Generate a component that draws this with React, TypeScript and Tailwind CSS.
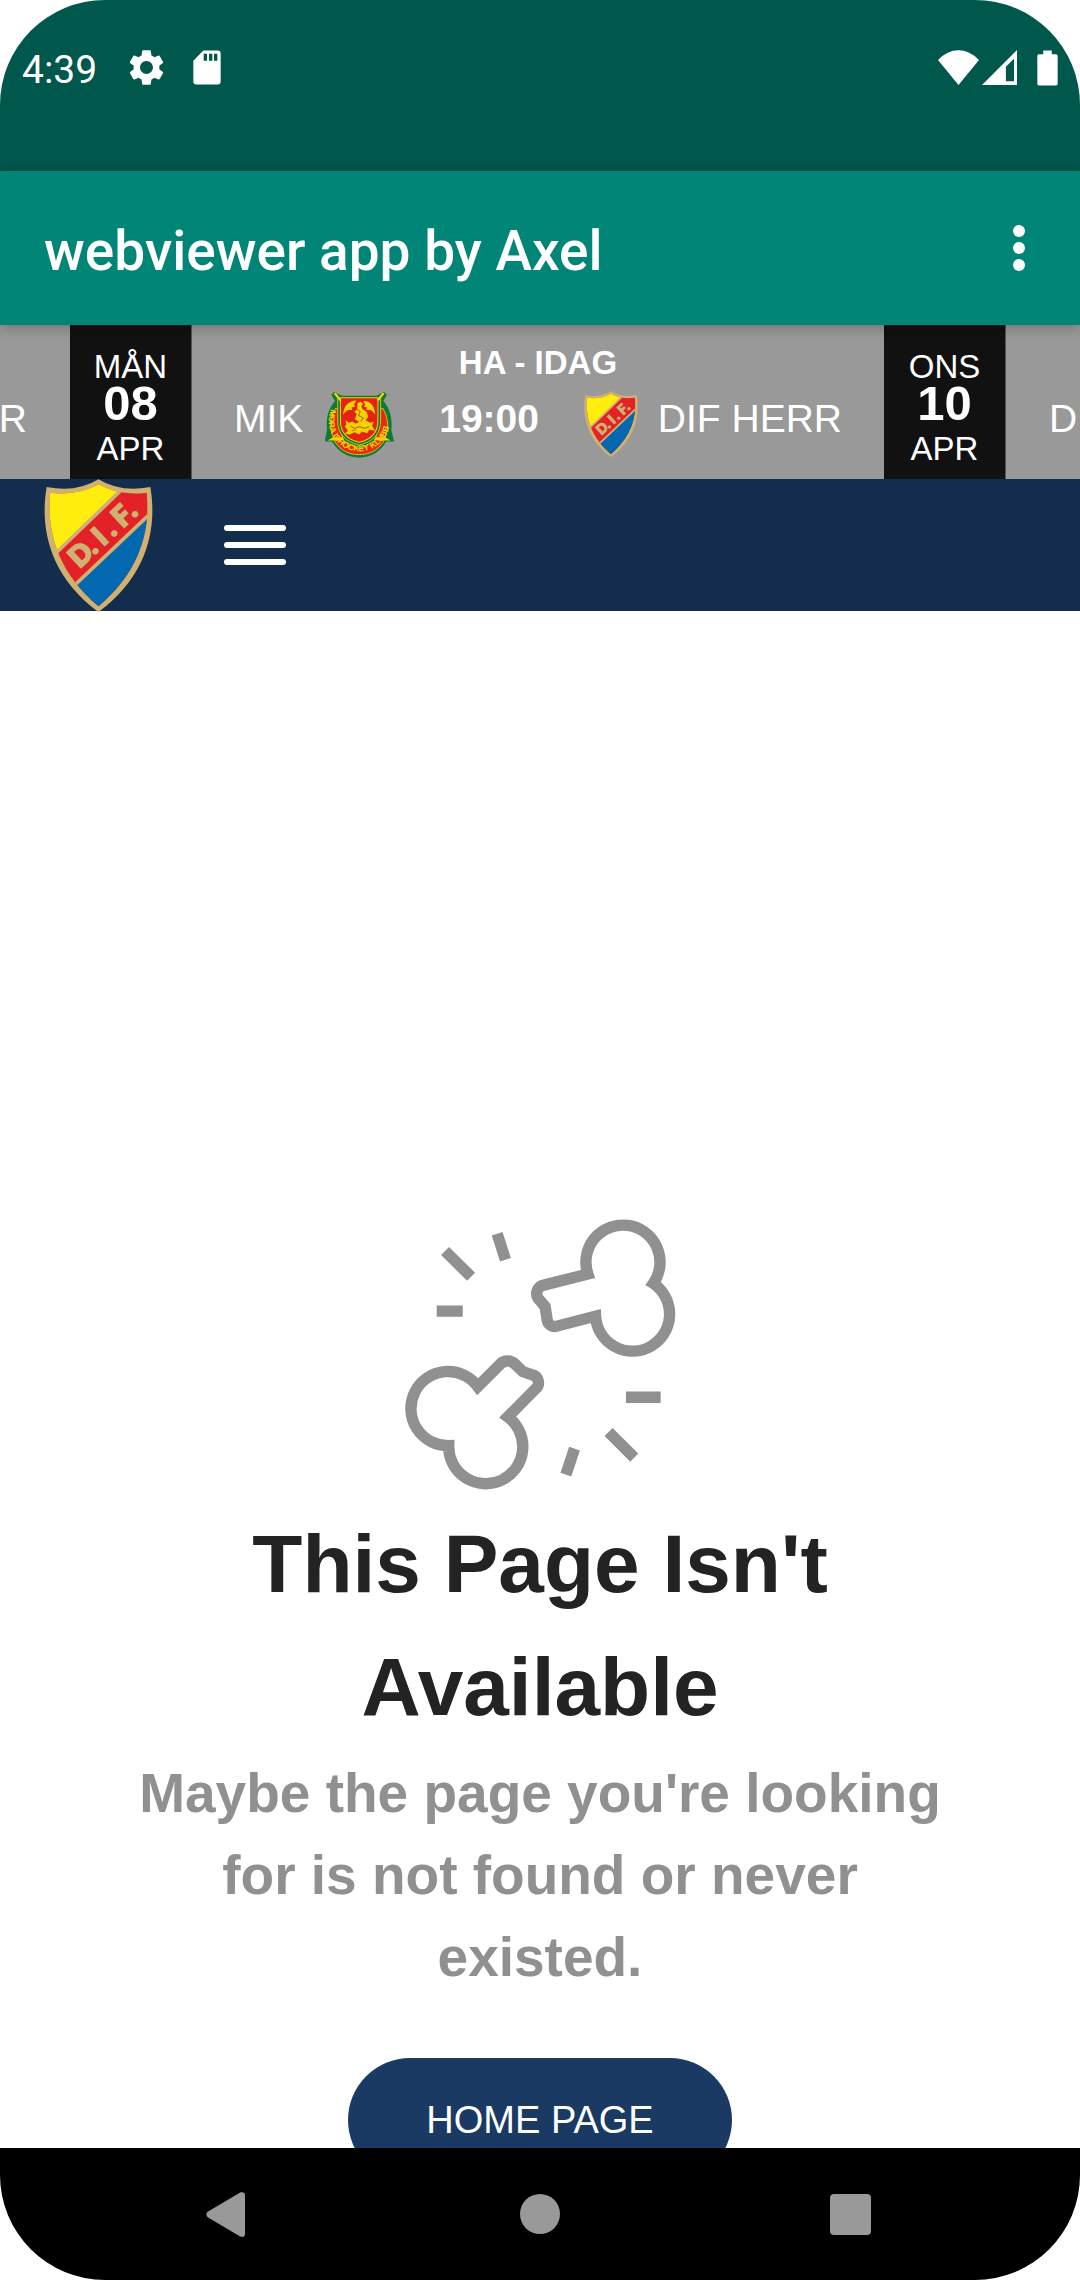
import React from "react";

function GearIcon() {
  return (
    <svg viewBox="0 0 24 24" className="size-[43px]" fill="currentColor" aria-hidden="true">
      <path d="M19.14 12.94c.04-.3.06-.61.06-.94 0-.32-.02-.64-.07-.94l2.03-1.58a.49.49 0 0 0 .12-.61l-1.92-3.32a.488.488 0 0 0-.59-.22l-2.39.96c-.5-.38-1.03-.7-1.62-.94L14.4 2.81a.484.484 0 0 0-.48-.41h-3.84c-.24 0-.43.17-.47.41l-.36 2.54c-.59.24-1.13.57-1.62.94l-2.39-.96c-.22-.08-.47 0-.59.22L2.74 8.87c-.12.21-.08.47.12.61l2.03 1.58c-.05.3-.09.63-.09.94s.02.64.07.94l-2.03 1.58a.49.49 0 0 0-.12.61l1.92 3.32c.12.22.37.29.59.22l2.39-.96c.5.38 1.03.7 1.62.94l.36 2.54c.05.24.24.41.48.41h3.84c.24 0 .44-.17.47-.41l.36-2.54c.59-.24 1.13-.56 1.62-.94l2.39.96c.22.08.47 0 .59-.22l1.92-3.32c.12-.22.07-.47-.12-.61l-2.01-1.58zM12 15.6c-1.98 0-3.6-1.62-3.6-3.6s1.62-3.6 3.6-3.6 3.6 1.62 3.6 3.6-1.62 3.6-3.6 3.6z" />
    </svg>
  );
}

function SdCardIcon() {
  return (
    <svg viewBox="0 0 84 104" className="h-[35px] w-7" fill="currentColor" aria-hidden="true">
      <path
        fillRule="evenodd"
        d="M31 1H74Q83 1 83 10V94Q83 103 74 103H10Q1 103 1 94V32ZM32 11V32H42V11ZM48 11V32H58V11ZM63 11V32H73V11Z"
      />
    </svg>
  );
}

function StatusBar() {
  return (
    <div className="flex h-[171px] shrink-0 items-center justify-between bg-[#00574b] pr-[22px] pb-9 pl-[22px] text-white">
      <div className="flex items-center">
        <span className="pt-1 font-['Roboto',sans-serif] text-[39px] leading-[46px]">4:39</span>
        <div className="ml-7 flex items-center gap-[25px]">
          <GearIcon />
          <SdCardIcon />
        </div>
      </div>
      <div className="flex items-center">
        <svg viewBox="0 0 122 104" className="h-[35px] w-[41px]" fill="currentColor" aria-hidden="true">
          <path d="M0 30Q28 1 61 1T122 30L61 104Z" />
        </svg>
        <svg viewBox="0 0 104 104" className="ml-[3px] size-[35px]" fill="currentColor" aria-hidden="true">
          <path fillRule="evenodd" d="M104 0V104H0ZM95 26L71 50V93H95Z" />
        </svg>
        <svg viewBox="0 0 64 108" className="ml-5 h-9 w-[21px]" fill="currentColor" aria-hidden="true">
          <path d="M19 1H45V12H58Q63 12 63 17V102Q63 107 58 107H6Q1 107 1 102V17Q1 12 6 12H19Z" />
        </svg>
      </div>
    </div>
  );
}

function AppBar() {
  return (
    <header className="relative z-10 flex h-[154px] shrink-0 items-center justify-between bg-[#008577] pr-[41px] pl-11 text-white shadow-[0_3px_12px_rgba(0,0,0,0.25)]">
      <h1 className="pt-[6px] font-['Roboto',sans-serif] text-[55px] leading-[64px] font-medium">
        webviewer app by Axel
      </h1>
      <button type="button" aria-label="More options" className="flex w-10 flex-col items-center gap-[5px]">
        <span className="size-3 rounded-full bg-white" />
        <span className="size-3 rounded-full bg-white" />
        <span className="size-3 rounded-full bg-white" />
      </button>
    </header>
  );
}

function DifCrest({ className }: { className: string }) {
  const id = React.useId();
  return (
    <svg viewBox="73 56 328 400" className={className} role="img" aria-label="DIF">
      <defs>
        <clipPath id={id}>
          <path d="M237 72Q173 108 92 97C82 190 100 325 237 439C374 325 392 190 382 97Q301 108 237 72Z" />
        </clipPath>
      </defs>
      <path
        d="M237 57Q170 98 81 80C62 190 80 340 237 456C394 340 412 190 393 80Q304 98 237 57Z"
        fill="#cfb272"
      />
      <g clipPath={`url(#${id})`}>
        <path d="M60 40H420V480H60Z" fill="#e32227" />
        <path d="M60 40H356L60 326Z" fill="#ffed0e" />
        <path d="M420 134L60 475V490H420Z" fill="#0468b1" />
        <path d="M356 40L60 326M420 134L60 475" stroke="#cfb272" strokeWidth="11" fill="none" />
      </g>
      <text
        transform="translate(180 326) rotate(-43)"
        x="0 61 98 139 178 224"
        fill="#cfb272"
        stroke="#cfb272"
        strokeWidth="6"
        fontSize="84"
        fontWeight="900"
        fontFamily="Lato, sans-serif"
      >
        D.I.F.
      </text>
    </svg>
  );
}

function MoraCrest() {
  const id = React.useId();
  return (
    <svg viewBox="48 60 206 204" className="h-[69px] w-[69px]" role="img" aria-label="Mora Ishockeyklubb">
      <defs>
        <path id={id} d="M65 116A92 92 0 1 0 235 116" />
      </defs>
      <path d="M76 64L98 76H202L224 64L233 73L222 92C240 112 250 140 246 178L254 213H231C212 245 184 261 150 261S88 245 69 213H47L54 178C50 140 60 112 78 92L67 73Z" fill="#0a7c36" />
      <path d="M79 114L94 118V180L104 211L150 235L196 211L206 180V118L221 114C235 140 239 165 231 190L222 214C205 240 180 252 150 252S95 240 78 214L69 190C61 165 65 140 79 114Z" fill="#e42b18" stroke="#f5d400" strokeWidth="2.5" />
      <path d="M86 84H214V150C214 192 190 214 150 223C110 214 86 192 86 150Z" fill="#0a7c36" stroke="#f5d400" strokeWidth="2.5" />
      <path d="M94 82H206V150C206 188 186 207 150 215C114 207 94 188 94 150Z" fill="#e42313" stroke="#f5d400" strokeWidth="3" />
      <path d="M77 68L94 90M223 68L206 90" stroke="#f5d400" strokeWidth="7" fill="none" />
      <path d="M56 210L72 200H100L106 209ZM244 210L228 200H200L194 209Z" fill="#f5d400" />
      <path
        d="M102 133C103 108 117 91 142 90L134 103L139 109L127 111L130 119L116 119C110 122 107 127 102 133ZM198 133C197 108 184 91 162 92L168 103L164 109L174 111L171 119L184 119C190 122 194 127 198 133ZM145 98L155 94L162 101L156 107L160 116L172 124L177 139L169 149L183 157L194 154L188 166L198 181L180 178L174 188L158 183L150 192L136 185L122 192L107 189L117 181L107 168L112 161L109 149L120 157L130 153L140 160L150 154L137 146L143 130L136 124L144 116Z"
        fill="#f2d200"
      />
      <path d="M143 116L153 123L148 135L162 143L155 153M124 166L136 174L152 168L166 174L180 168M128 181L140 178" stroke="#b5660f" strokeWidth="3" fill="none" />
      <text fill="#f5d400" fontSize="25" fontWeight="700" fontFamily="Liberation Sans, sans-serif" dy="-1">
        <textPath href={`#${id}`} startOffset="0">
          MORA ISHOCKEY KLUBB
        </textPath>
      </text>
    </svg>
  );
}

function DateCell({ weekday, day, month }: { weekday: string; day: string; month: string }) {
  return (
    <div className="flex w-[122px] shrink-0 flex-col items-center border-r border-[#555] bg-[#111] pt-[22px] text-[33px] leading-10">
      <span>{weekday}</span>
      <span className="text-[49px] leading-8 font-bold">{day}</span>
      <span className="mt-[10px]">{month}</span>
    </div>
  );
}

function MatchTicker() {
  return (
    <section
      aria-label="Matches"
      className="flex h-[154px] shrink-0 justify-center overflow-hidden bg-[#999] pr-1 text-[39px] leading-[44px] whitespace-nowrap text-white"
    >
      <div className="flex w-[692px] shrink-0 justify-end px-[43px] pt-[72px]">DIF HERR</div>
      <DateCell weekday="MÅN" day="08" month="APR" />
      <div className="flex w-[692px] shrink-0 flex-col px-[42px] pt-[18px]">
        <div className="text-center text-[33px] leading-10 font-bold">HA - IDAG</div>
        <div className="flex h-[82px] items-center justify-between">
          <div className="flex items-center gap-[22px]">
            <span className="mb-[10px]">MIK</span>
            <MoraCrest />
          </div>
          <span className="mb-[10px] font-bold">19:00</span>
          <div className="flex items-center gap-5">
            <DifCrest className="h-[66px] w-[54px]" />
            <span className="mb-[10px]">DIF HERR</span>
          </div>
        </div>
      </div>
      <DateCell weekday="ONS" day="10" month="APR" />
      <div className="w-[692px] shrink-0 px-[43px] pt-[72px]">DIF HERR</div>
    </section>
  );
}

function SiteHeader() {
  return (
    <nav aria-label="Site" className="flex h-[132px] shrink-0 items-center bg-[#142d4d] pl-11">
      <a href="#home" aria-label="DIF home">
        <DifCrest className="h-[133px] w-[109px]" />
      </a>
      <button type="button" aria-label="Menu" className="ml-[71px] flex w-[62px] flex-col gap-[11px]">
        <span className="h-[6px] rounded-full bg-white" />
        <span className="h-[6px] rounded-full bg-white" />
        <span className="h-[6px] rounded-full bg-white" />
      </button>
    </nav>
  );
}

function BrokenIcon() {
  return (
    <svg
      viewBox="73 85 815 815"
      className="size-[272px]"
      fill="none"
      stroke="#909090"
      strokeWidth="34"
      strokeMiterlimit="10"
      aria-hidden="true"
    >
      <path d="M624 253L492 286A26 26 0 0 0 475 326L496 351L502 390A23 23 0 0 0 531 409L647 379A111 111 0 1 0 820 281A111 111 0 1 0 624 253Z" />
      <path d="M207 767A111 111 0 1 1 294 590L361 523A31 31 0 0 1 405 522L429 545L457 555A24 24 0 0 1 467 597L384 681A111 111 0 1 1 207 767Z" />
      <path d="M352 132L377 210M196 184L274 261M171 364H249M738 622H842M686 726L763 803M584 776L558 854" />
    </svg>
  );
}

function SystemNav() {
  return (
    <div className="grid h-[132px] shrink-0 grid-cols-3 place-items-center bg-black px-[71px]">
      <button type="button" aria-label="Back" className="mr-1">
        <svg viewBox="0 0 116 134" className="h-[45px] w-[39px]" fill="#999" aria-hidden="true">
          <path d="M103 1Q116 -2 116 10V124Q116 136 103 133L5 75Q-3 67 5 59Z" />
        </svg>
      </button>
      <button type="button" aria-label="Home" className="size-10 rounded-full bg-[#999]" />
      <button type="button" aria-label="Recent apps" className="mr-1 size-[41px] rounded-[4px] bg-[#999]" />
    </div>
  );
}

export default function App() {
  return (
    <div className="flex h-screen flex-col overflow-hidden rounded-[105px] bg-white font-['Liberation_Sans',Arial,sans-serif]">
      <StatusBar />
      <AppBar />
      <MatchTicker />
      <SiteHeader />
      <main className="flex min-h-0 flex-1 flex-col items-center overflow-hidden px-[110px] pt-[607px] text-center">
        <div className="shrink-0">
          <BrokenIcon />
        </div>
        <h2 className="mt-3 max-w-[700px] shrink-0 text-[82px] leading-[123px] font-bold text-[#232323]">
          This Page Isn't Available
        </h2>
        <p className="mt-1 max-w-[820px] shrink-0 text-[55px] leading-[82px] font-bold text-[#909090]">
          Maybe the page you're looking for is not found or never existed.
        </p>
        <a
          href="#home"
          className="mt-[60px] shrink-0 rounded-full bg-[#1a3a64] px-[78px] py-8 text-[38px] leading-[60px] text-white"
        >
          HOME PAGE
        </a>
      </main>
      <SystemNav />
    </div>
  );
}
